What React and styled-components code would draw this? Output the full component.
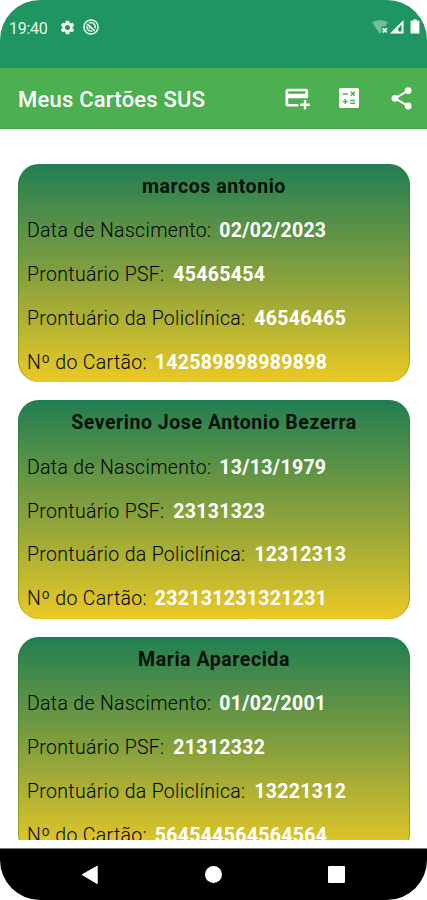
import React from 'react';
import styled, { createGlobalStyle } from 'styled-components';

const cards = [
  { name: 'marcos antonio', birth: '02/02/2023', psf: '45465454', clinic: '46546465', number: '142589898989898' },
  { name: 'Severino Jose Antonio Bezerra', birth: '13/13/1979', psf: '23131323', clinic: '12312313', number: '232131231321231' },
  { name: 'Maria Aparecida', birth: '01/02/2001', psf: '21312332', clinic: '13221312', number: '564544564564564' },
];

const SusCard = ({ card }) => {
  return (
    <Card>
      <Name>{card.name}</Name>
      <Row><Label $width={183}>Data de Nascimento:</Label><Value>{card.birth}</Value></Row>
      <Row><Label $width={137}>Prontuário PSF:</Label><Value>{card.psf}</Value></Row>
      <Row><Label $width={218}>Prontuário da Policlínica:</Label><Value>{card.clinic}</Value></Row>
      <Row><Label $width={118.5}>Nº do Cartão:</Label><Value>{card.number}</Value></Row>
    </Card>
  );
};

const StatusBar = () => (
  <Status>
    <Clock>19:40</Clock>
    <svg width="17" height="17" viewBox="0 0 24 24" fill="#effaf3">
      <path d="M19.14 12.94c.04-.3.06-.61.06-.94 0-.32-.02-.64-.07-.94l2.03-1.58a.49.49 0 0 0 .12-.61l-1.92-3.32a.488.488 0 0 0-.59-.22l-2.39.96c-.5-.38-1.03-.7-1.62-.94l-.36-2.54a.484.484 0 0 0-.48-.41h-3.84c-.24 0-.43.17-.47.41l-.36 2.54c-.59.24-1.13.57-1.62.94l-2.39-.96c-.22-.08-.47 0-.59.22L2.74 8.87c-.12.21-.08.47.12.61l2.03 1.58c-.05.3-.09.63-.09.94s.02.64.07.94l-2.03 1.58a.49.49 0 0 0-.12.61l1.92 3.32c.12.22.37.29.59.22l2.39-.96c.5.38 1.03.7 1.62.94l.36 2.54c.05.24.24.41.48.41h3.84c.24 0 .44-.17.47-.41l.36-2.54c.59-.24 1.13-.56 1.62-.94l2.39.96c.22.08.47 0 .59-.22l1.92-3.32c.12-.22.07-.47-.12-.61l-2.01-1.58zM12 15.6c-1.98 0-3.6-1.62-3.6-3.6s1.62-3.6 3.6-3.6 3.6 1.62 3.6 3.6-1.62 3.6-3.6 3.6z" />
    </svg>
    <Ring width="16" height="16" viewBox="0 0 16 16" fill="none" stroke="#effaf3">
      <circle cx="8" cy="8" r="7.1" strokeWidth="1.5" />
      <path d="M4 4.8l7.8 7" strokeWidth="1.6" />
      <path d="M6 4.2a4.2 4.2 0 0 1 6 5M4 6.8a4.2 4.2 0 0 0 5.4 5.1" strokeWidth="1.4" />
      <circle cx="7" cy="8.6" r=".8" strokeWidth="1" />
    </Ring>
    <Signals width="49" height="16" viewBox="0 0 49 16">
      <path d="M0 3.6Q8 -1.8 16 3.6L13.4 7.2H9.6V13L8 15z" fill="#fff" opacity=".38" />
      <path d="M10.8 9.4l4 4M14.8 9.4l-4 4" stroke="#fff" strokeWidth="1.7" />
      <path fillRule="evenodd" d="M18 14.5L31.5 1v13.5zM26.2 12.6h3.4V5.6l-3.4 3.6z" fill="#fff" />
      <path d="M38.6 1.8h2.6V.6h3.6v1.2h2.6v12.6h-8.8z" fill="#fff" />
    </Signals>
  </Status>
);

const App = () => {
  return (
    <Screen>
      <GlobalStyle />
      <StatusBar />
      <AppBar>
        <Title>Meus Cartões SUS</Title>
        <svg width="27" height="24" viewBox="0 0 27 24" fill="#fff">
          <path fillRule="evenodd" d="M4 2.8h17.6a2.5 2.5 0 0 1 2.5 2.5v7H4.2v5.6h10.1v2.6H4A2.5 2.5 0 0 1 1.5 18V5.3A2.5 2.5 0 0 1 4 2.8zM4.2 5.3v2.5h17.2V5.3z" />
          <path d="M19.8 14.1h2.4v3.5h3.6V20h-3.6v3.6h-2.4V20h-3.6v-2.4h3.6z" />
        </svg>
        <Calculator width="22" height="22" viewBox="0 0 22 22">
          <rect x="1" y="1" width="20" height="20" rx="2" fill="#fff" />
          <path d="M4.8 6.9h5M12.8 4.8l4 4M16.8 4.8l-4 4M4.8 14.6h5M7.3 12.1v5M12.2 13.4h5M12.2 16.2h5" fill="none" stroke="#4caf50" strokeWidth="1.5" />
        </Calculator>
        <svg width="22" height="24" viewBox="0 0 22 24" fill="#fff">
          <path d="M3.9 12.3l13.3-7.7M3.9 12.3L17.2 20" stroke="#fff" strokeWidth="2.1" />
          <circle cx="3.9" cy="12.3" r="3.4" />
          <circle cx="17.2" cy="4.6" r="3.4" />
          <circle cx="17.2" cy="20" r="3.4" />
        </svg>
      </AppBar>
      <List>
        {cards.map((card) => <SusCard key={card.number} card={card} />)}
      </List>
      <NavBar>
        <svg width="18" height="20" viewBox="0 0 18 20" fill="#fff">
          <path d="M1.2 9.7L16.2 1.2v17.4z" stroke="#fff" strokeLinejoin="round" />
        </svg>
        <HomeButton />
        <RecentButton />
      </NavBar>
    </Screen>
  );
};

const GlobalStyle = createGlobalStyle`
  body {
    margin: 0;
    background: #fff;
  }
`;

const Screen = styled.div`
  display: flex;
  flex-direction: column;
  box-sizing: border-box;
  width: 427px;
  height: 900px;
  overflow: hidden;
  border-radius: 40px;
  background: #fff;
  font-family: Roboto, sans-serif;
`;

const Status = styled.div`
  display: flex;
  align-items: center;
  flex: none;
  box-sizing: border-box;
  height: 67.5px;
  padding: 0 6px 13px 9px;
  background: #1f9661;
`;

const Clock = styled.span`
  width: 49.5px;
  padding-top: 2px;
  font-size: 16px;
  letter-spacing: -0.3px;
  color: #e4f5eb;
`;

const Ring = styled.svg`
  margin-left: 7.5px;
`;

const Signals = styled.svg`
  margin-left: auto;
`;

const AppBar = styled.div`
  display: flex;
  align-items: center;
  flex: none;
  box-sizing: border-box;
  height: 61.5px;
  padding: 0 14px 0 18px;
  gap: 29px;
  background: #4caf50;
  border-bottom: 1px solid #45a34c;
`;

const Title = styled.h1`
  flex: 1;
  margin: 4px 0 0;
  font-size: 22px;
  font-weight: 500;
  letter-spacing: 0.22px;
  white-space: nowrap;
  color: #fff;
`;

const Calculator = styled.svg`
  margin: 0 2px 0 -2px;
`;

const List = styled.div`
  display: flex;
  flex-direction: column;
  flex: 1;
  min-height: 0;
  gap: 18px;
  padding: 34.7px 17px 0 18px;
  margin-bottom: 8.5px;
  overflow: hidden;
`;

const Card = styled.div`
  flex: none;
  box-sizing: border-box;
  height: 218.5px;
  border-radius: 21px;
  background: linear-gradient(#217e52, #839f3e 50%, #ebc925);
  box-shadow: inset 1px 0 rgba(0, 110, 0, 0.3), inset -1px 0 rgba(0, 110, 0, 0.3);
`;

const Name = styled.div`
  height: 43.75px;
  line-height: 46.6px;
  font-size: 19.5px;
  font-weight: 700;
  letter-spacing: 0.55px;
  text-align: center;
  color: #04110a;
`;

const Row = styled.div`
  display: flex;
  height: 43.75px;
  padding-left: 9px;
  line-height: 47.4px;
  font-size: 19.5px;
  white-space: nowrap;
`;

const Label = styled.span`
  width: ${({ $width }) => $width}px;
  margin-right: 9.3px;
  font-weight: 300;
  letter-spacing: 0.32px;
  color: #000;
`;

const Value = styled.span`
  font-weight: 700;
  letter-spacing: 0.31px;
  color: #fff;
`;

const NavBar = styled.div`
  display: flex;
  align-items: center;
  justify-content: space-between;
  flex: none;
  box-sizing: border-box;
  height: 52px;
  padding: 0 82px 0 81px;
  background: #000;
  border-top: 1px solid #777;
`;

const HomeButton = styled.div`
  width: 17px;
  height: 17px;
  border-radius: 50%;
  background: #fff;
`;

const RecentButton = styled.div`
  width: 17px;
  height: 17px;
  border-radius: 1px;
  background: #fff;
`;

export default App;
